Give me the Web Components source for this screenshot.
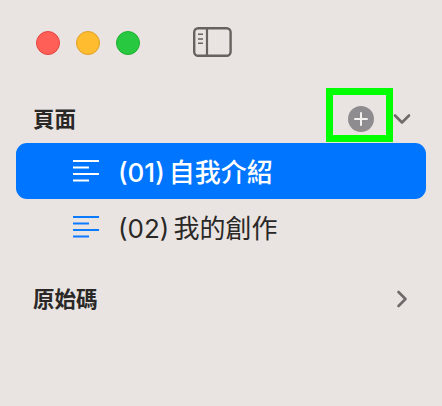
<!DOCTYPE html>
<html lang="zh-Hant">
<head>
<meta charset="utf-8">
<title>Sidebar</title>
<style>
  html, body { margin: 0; height: 100%; }
  body {
    background: #e9e4e1;
    font-family: Inter, "Noto Sans CJK TC", sans-serif;
    color: #2a2827;
    overflow: hidden;
  }
</style>
</head>
<body>
<side-bar>
  <window-bar></window-bar>
  <side-section label="頁面" open add>
    <page-row active>(01) 自我介紹</page-row>
    <page-row>(02) 我的創作</page-row>
  </side-section>
  <side-section label="原始碼"></side-section>
</side-bar>

<script>
class SideBar extends HTMLElement {
  constructor() {
    super();
    this.attachShadow({ mode: "open" });
    this.shadowRoot.innerHTML = `<style>
      :host { display: flex; flex-direction: column; width: 442px; height: 406px; }
    </style><slot></slot>`;
  }
}

class WindowBar extends HTMLElement {
  constructor() {
    super();
    this.attachShadow({ mode: "open" });
    this.shadowRoot.innerHTML = `<style>
      :host { display: flex; align-items: center; height: 86px; margin-bottom: 10px; padding-left: 36px; }
      .dot { width: 24px; height: 24px; border-radius: 50%; box-sizing: border-box; margin-right: 16px; border: 1px solid; }
      .red { background: #ff5f57; border-color: #e5453f; }
      .yellow { background: #febc2e; border-color: #e0a026; }
      .green { background: #28c840; border-color: #1fae32; }
      svg { display: block; margin-left: 37px; }
    </style>
    <div class="dot red"></div>
    <div class="dot yellow"></div>
    <div class="dot green"></div>
    <svg width="40" height="32" viewBox="0 0 40 32" fill="none" stroke="#68625e">
      <rect x="1.2" y="1.2" width="36.400" height="27.600" rx="4" stroke-width="2.400"/>
      <path d="M14 1v28" stroke-width="2.200"/>
      <path d="M5 7.300h5M5 12h5M5 16.300h5" stroke-width="1.400"/>
    </svg>`;
  }
}

class SideSection extends HTMLElement {
  constructor() {
    super();
    this.attachShadow({ mode: "open" });
    const open = this.hasAttribute("open");
    const add = this.hasAttribute("add");
    this.shadowRoot.innerHTML = `<style>
      :host { display: block; }
      .head { display: flex; align-items: center; height: 46px; padding: 0 31px 0 33px; }
      .title { flex: 1; font-size: 21.500px; font-weight: 700; padding-bottom: 3px; }
      .add { position: relative; width: 26px; height: 26px; margin-right: 19px; }
      .add svg { display: block; }
      /* green highlight lies over the header */
      .add::after {
        content: ""; position: absolute; left: -22px; right: -19px; top: -18px; bottom: -10px;
        border: 7px solid #00ff00; box-sizing: border-box;
      }
      .chev { display: block; }
      .rows { display: flex; flex-direction: column; padding: 1px 16px 21px; }
    </style>
    <div class="head">
      <span class="title">${this.getAttribute("label")}</span>
      ${add ? `<div class="add"><svg width="26" height="26" viewBox="0 0 26 26">
        <circle cx="13" cy="13" r="13" fill="#8f8c8f"/>
        <path d="M13 7v12M7 13h12" stroke="#f4f2f1" stroke-width="2" stroke-linecap="round"/>
      </svg></div>` : ""}
      ${open
        ? `<svg class="chev" width="18" height="12" viewBox="0 0 18 12" fill="none" stroke="#6f6b69" stroke-width="2.600" stroke-linecap="round" stroke-linejoin="round"><path d="M2 2.500l7 7 7-7"/></svg>`
        : `<svg class="chev" style="margin-right:3px" width="12" height="18" viewBox="0 0 12 18" fill="none" stroke="#6f6b69" stroke-width="2.600" stroke-linecap="round" stroke-linejoin="round"><path d="M2.500 2l7 7-7 7"/></svg>`}
    </div>
    <div class="rows"><slot></slot></div>`;
  }
}

class PageRow extends HTMLElement {
  constructor() {
    super();
    this.attachShadow({ mode: "open" });
    this.shadowRoot.innerHTML = `<style>
      :host {
        display: flex; align-items: center; height: 56px; padding-left: 57px;
        border-radius: 11px; font-size: 26px; word-spacing: -3px;
        color: #2a2827; --line: #0a7aff;
      }
      :host([active]) { background: #0075ff; color: #fff; font-weight: 500; --line: #fff; }
      svg { display: block; margin: 0 19px 0 0; flex: none; }
      span { padding-bottom: 2px; }
    </style>
    <svg width="26" height="24" viewBox="0 0 26 24" fill="none" stroke="var(--line)" stroke-width="1.800">
      <path d="M0 2h26M0 8.500h16M0 15h26M0 21.500h16"/>
    </svg>
    <span><slot></slot></span>`;
  }
}

customElements.define("side-bar", SideBar);
customElements.define("window-bar", WindowBar);
customElements.define("side-section", SideSection);
customElements.define("page-row", PageRow);
</script>
</body>
</html>
